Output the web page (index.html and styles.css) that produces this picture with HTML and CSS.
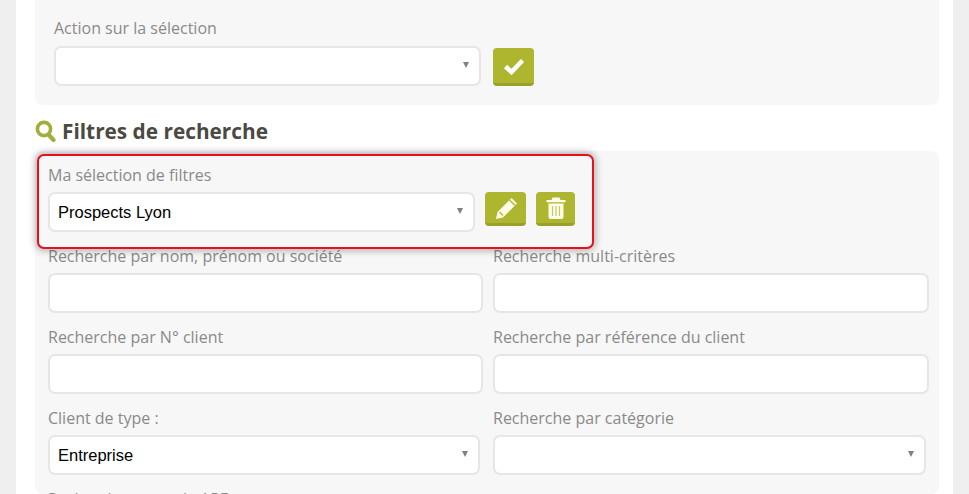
FILE: index.html
```html
<!DOCTYPE html>
<html lang="fr">
<head>
<meta charset="utf-8">
<title>Filtres de recherche</title>
<link rel="stylesheet" href="styles.css">
</head>
<body>
<main class="page">
  <section class="panel panel-action">
    <label class="label">Action sur la sélection</label>
    <div class="select-row">
      <div class="select-wrap select-action"><select class="control"><option></option></select></div>
      <button class="btn btn-check" type="button" aria-label="Valider">
        <svg width="22" height="18" viewBox="0 0 22 18"><path d="M2.500 9.500 8.500 15 19.500 3.500" fill="none" stroke="#fff" stroke-width="4.600"/></svg>
      </button>
    </div>
  </section>

  <h2 class="title">
    <svg class="title-icon" width="21" height="22" viewBox="0 0 21 22"><circle cx="9" cy="9" r="6.600" fill="none" stroke="#a3ad3c" stroke-width="3.600"/><path d="M13.500 14.500 18.500 20" stroke="#a3ad3c" stroke-width="4.200" stroke-linecap="round"/></svg>
    Filtres de recherche
  </h2>

  <section class="panel panel-filters">
    <div class="highlight">
      <label class="label">Ma sélection de filtres</label>
      <div class="select-row">
        <div class="select-wrap select-saved"><select class="control"><option>Prospects Lyon</option></select></div>
        <button class="btn btn-edit" type="button" aria-label="Modifier">
          <svg width="24" height="24" viewBox="0 0 24 24"><path d="M2 23 3.500 16 17.500 2 23 7.500 9 21.500Z" fill="#fdfde8"/><path d="M15.500 4 21 9.500" stroke="#aeb52e" stroke-width="1.200"/><path d="M5.500 16 9 19.500" stroke="#aeb52e" stroke-width="1.200"/></svg>
        </button>
        <button class="btn btn-trash" type="button" aria-label="Supprimer">
          <svg width="20" height="22" viewBox="0 0 20 22"><path d="M0.500 3h19v2.200H0.500zM6.500 0.500h7l1 2.500h-9z" fill="#fdfde8"/><path d="M2.500 6.500h15V20a2 2 0 0 1-2 2h-11a2 2 0 0 1-2-2z" fill="#fdfde8"/><path d="M6.500 9v10M10 9v10M13.500 9v10" stroke="#c3c86a" stroke-width="1.200"/></svg>
        </button>
      </div>
    </div>

    <div class="form-grid">
      <div class="field"><label class="label">Recherche par nom, prénom ou société</label><input class="control" type="text"></div>
      <div class="field"><label class="label">Recherche multi-critères</label><input class="control" type="text"></div>
      <div class="field"><label class="label">Recherche par N° client</label><input class="control" type="text"></div>
      <div class="field"><label class="label">Recherche par référence du client</label><input class="control" type="text"></div>
      <div class="field"><label class="label">Client de type :</label><div class="select-wrap select-left"><select class="control"><option>Entreprise</option></select></div></div>
      <div class="field"><label class="label">Recherche par catégorie</label><div class="select-wrap select-right"><select class="control"><option></option></select></div></div>
      <div class="field"><label class="label">Recherche par code APE</label></div>
    </div>
  </section>
</main>
</body>
</html>
```
FILE: styles.css
```css
* { box-sizing: border-box; }

html, body {
  margin: 0;
  height: 494px;
  overflow: hidden;
  background: #efefef;
}

.page {
  margin: 0 16px;
  height: 494px;
  overflow: hidden;
  padding: 0 14px 0 19px;
  background: #fff;
  font-family: "Open Sans", sans-serif;
}

.panel {
  background: #f7f7f7;
  border-radius: 8px;
}

.panel-action {
  height: 105px;
  padding: 17px 19px 0;
  border-radius: 0 0 8px 8px;
}

.label {
  display: block;
  height: 22px;
  font-size: 16px;
  line-height: 22px;
  color: #8a8a8a;
  white-space: nowrap;
}

.select-row {
  display: flex;
  align-items: flex-start;
}

.panel-action .select-row { margin-top: 7px; }

.control {
  display: block;
  width: 100%;
  height: 40px;
  padding: 0 8px;
  border: 2px solid #e6e6e6;
  border-radius: 7px;
  background: #fff;
  font-family: "Liberation Sans", Arial, sans-serif;
  font-size: 16.500px;
  color: #000;
  appearance: none;
  outline: 0;
}

.select-wrap { position: relative; }

.select-wrap::after {
  content: "";
  position: absolute;
  top: 16px;
  right: 12px;
  border-left: 3.500px solid transparent;
  border-right: 3.500px solid transparent;
  border-top: 6px solid #808080;
}

.select-action { width: 427px; }
.select-saved { width: 427px; }
.select-left { width: 432px; }
.select-right { width: 433px; }

.btn {
  display: flex;
  align-items: center;
  justify-content: center;
  padding: 0;
  border: 0;
  border-bottom: 3px solid #9aa02a;
  border-radius: 4px;
  background: #aeb52e;
}

.btn-check { width: 41px; height: 38px; margin: 2px 0 0 12px; }
.btn-edit { width: 41px; height: 34px; margin-left: 10px; }
.btn-trash { width: 39px; height: 34px; margin-left: 10px; }

.title {
  display: flex;
  align-items: center;
  gap: 6px;
  height: 46px;
  margin: 0;
  padding-top: 6px;
  font-size: 20.800px;
  font-weight: 700;
  color: #4a4a42;
}

.panel-filters {
  position: relative;
  height: 343px;
  padding: 3px 10px 0 2px;
}

.highlight {
  width: 557px;
  height: 95px;
  margin-bottom: -4px;
  padding: 8px 9px 0;
  position: relative;
  z-index: 1;
  background: #f7f7f7;
  border: 2px solid #e8101c;
  border-radius: 7px;
  box-shadow: 0 0 7px 2px rgba(0, 0, 0, 0.28);
}

.highlight .select-row { margin-top: 6px; }

.form-grid {
  display: grid;
  grid-template-columns: 435px 436px;
  column-gap: 10px;
  row-gap: 13px;
  padding-left: 11px;
}

.field .label { margin-bottom: 6px; }
```
